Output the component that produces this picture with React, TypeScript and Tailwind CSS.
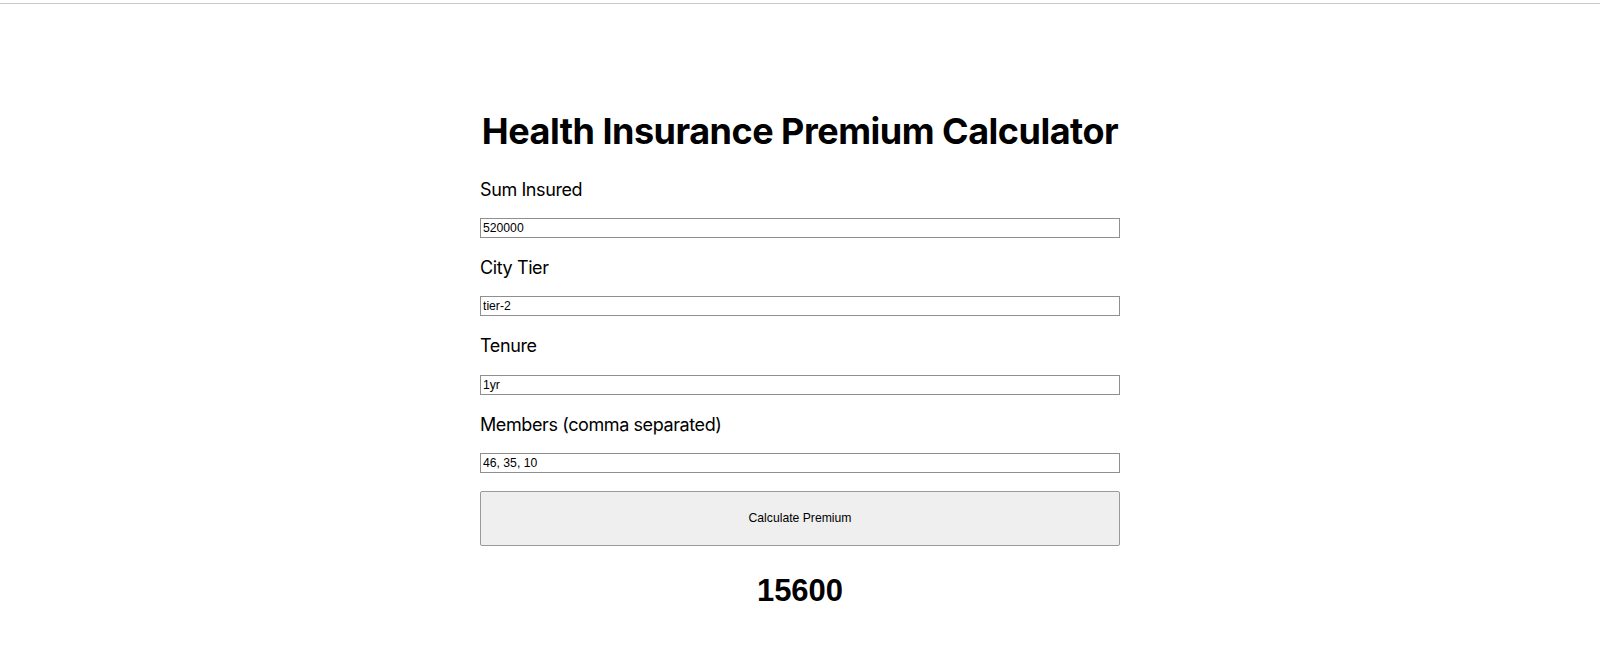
import { useState } from "react";

const fields = [
  { label: "Sum Insured", value: "520000" },
  { label: "City Tier", value: "tier-2" },
  { label: "Tenure", value: "1yr" },
  { label: "Members (comma separated)", value: "46, 35, 10" },
];

const App = () => {
  const [values, setValues] = useState(fields.map((f) => f.value));

  return (
    <div className="min-h-screen bg-white">
      <div className="pt-[3px]">
        <div className="border-t border-[#c8c8c8]" />
      </div>
      <div className="mx-auto w-[640px] pt-[107px] font-['Inter',sans-serif] text-black">
        <h1 className="mb-[25px] whitespace-nowrap text-center text-4xl leading-10 font-bold tracking-[-0.5px]">
          Health Insurance Premium Calculator
        </h1>
        {fields.map((field, i) => (
          <div key={field.label}>
            <label className="mb-[14.2px] block text-lg leading-7 tracking-[-0.4px]">{field.label}</label>
            <input
              className="mb-[16px] block h-[20px] w-full border border-[#8f8f8f] px-[2px] font-['Liberation_Sans',Arial,sans-serif] text-[12.2px] text-black outline-none"
              value={values[i]}
              onChange={(e) => {
                const next = [...values];
                next[i] = e.target.value;
                setValues(next);
              }}
            />
          </div>
        ))}
        <button className="mt-[18px] block h-[55px] w-full rounded-[2px] border border-[#9a9a9a] bg-[#efefef] font-['Liberation_Sans',Arial,sans-serif] text-[12.2px] text-black">
          Calculate Premium
        </button>
        <div className="mt-[27px] text-center font-['Liberation_Sans',Arial,sans-serif] text-[31px] leading-9 font-bold">
          15600
        </div>
      </div>
    </div>
  );
};

export default App;
